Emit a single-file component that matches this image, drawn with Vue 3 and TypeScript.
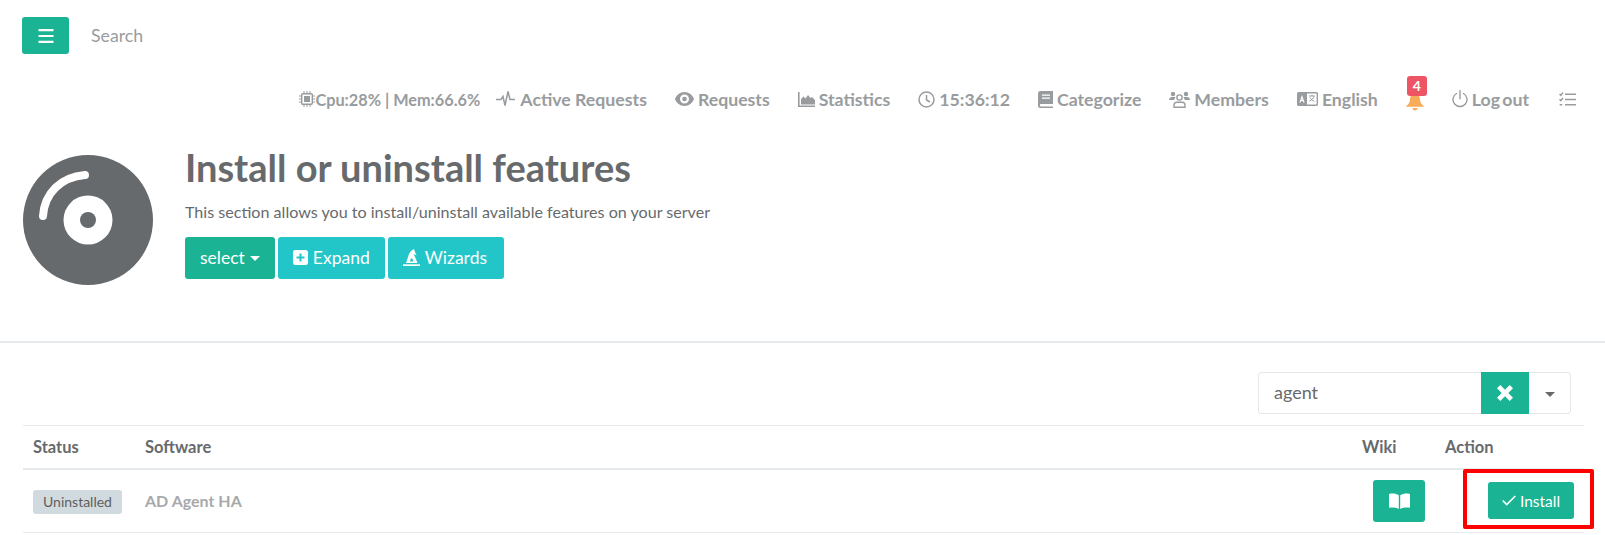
<template>
  <div class="page">
    <div class="topbar">
      <button class="menu-btn">
        <svg width="16" height="14" viewBox="0 0 16 14"><path d="M0.500 0h15v2.200h-15zM0.500 5.900h15v2.200h-15zM0.500 11.800h15v2.200h-15z" fill="#fff" /></svg>
      </button>
      <span class="search-text">Search</span>
    </div>

    <nav class="nav">
      <a class="nav-item cpu">
        <svg width="16" height="16" viewBox="0 0 16 16" fill="#999c9e"><rect x="2.700" y="2.700" width="10.600" height="10.600" rx="1" fill="none" stroke="#999c9e" stroke-width="1.400" /><rect x="5" y="5" width="6" height="6" /><path d="M0 4.500h2v1H0zM0 7.500h2v1H0zM0 10.500h2v1H0zM14 4.500h2v1h-2zM14 7.500h2v1h-2zM14 10.500h2v1h-2zM4.500 0h1v2h-1zM7.500 0h1v2h-1zM10.500 0h1v2h-1zM4.500 14h1v2h-1zM7.500 14h1v2h-1zM10.500 14h1v2h-1z" /></svg>
        <span>Cpu:28% | Mem:66.6%</span>
      </a>
      <a class="nav-item">
        <svg width="20" height="16" viewBox="0 0 20 16" fill="none" stroke="#999c9e" stroke-width="1.500"><path d="M0 8.500h5l2-3 2 9 3-14 2 8h5" /></svg>
        <span>Active Requests</span>
      </a>
      <a class="nav-item">
        <svg width="19" height="14" viewBox="0 0 19 14"><path fill-rule="evenodd" d="M9.500 0C14 0 17.500 3 19 7c-1.500 4-5 7-9.500 7S1.500 11 0 7c1.500-4 5-7 9.500-7zM9.500 2.500a4.500 4.500 0 1 0 0 9 4.500 4.500 0 0 0 0-9z" fill="#999c9e" /><circle cx="9.500" cy="7" r="2.300" fill="#999c9e" /></svg>
        <span>Requests</span>
      </a>
      <a class="nav-item">
        <svg width="17" height="15" viewBox="0 0 17 15" fill="#999c9e"><path d="M0 0h1.600v13.400H17V15H0z" /><path d="M3 12.400V7l2.500-2.500L7.500 6.500 10 3l2.500 3L14 5l3 3v4.400z" /></svg>
        <span>Statistics</span>
      </a>
      <a class="nav-item">
        <svg width="17" height="17" viewBox="0 0 17 17" fill="none" stroke="#999c9e" stroke-width="1.500"><circle cx="8.500" cy="8.500" r="7.500" /><path d="M8.500 4v5l3.500 2" /></svg>
        <span>15:36:12</span>
      </a>
      <a class="nav-item">
        <svg width="15" height="17" viewBox="0 0 15 17"><path d="M2.500 0H15v13H3a1.200 1.200 0 0 0 0 2.400h12V17H2.500A2.500 2.500 0 0 1 0 14.500v-12A2.500 2.500 0 0 1 2.500 0z" fill="#999c9e" /><path d="M4 3.500h8v1.300H4zM4 6.500h8v1.300H4z" fill="#fff" /></svg>
        <span>Categorize</span>
      </a>
      <a class="nav-item">
        <svg width="21" height="17" viewBox="0 0 21 17" fill="#999c9e"><circle cx="4" cy="3" r="2.200" /><circle cx="17" cy="3" r="2.200" /><path d="M0 9c0-2 1.500-3 3-3h2.500c.5 0 .8.200 1 .4C5.800 7 5.300 8 5.300 9z" /><path d="M21 9c0-2-1.500-3-3-3h-2.500c-.5 0-.8.200-1 .4.700.6 1.200 1.600 1.200 2.600z" /><circle cx="10.500" cy="6.500" r="2.600" fill="none" stroke="#999c9e" stroke-width="1.400" /><path d="M5 16.200v-2c0-2 1.500-3 3-3h5c1.500 0 3 1 3 3v2z" fill="none" stroke="#999c9e" stroke-width="1.400" /></svg>
        <span>Members</span>
      </a>
      <a class="nav-item">
        <svg width="21" height="14" viewBox="0 0 21 14"><path d="M1.500 0H10v14H1.500A1.500 1.500 0 0 1 0 12.500v-11A1.500 1.500 0 0 1 1.500 0z" fill="#999c9e" /><path d="M10 .7h9.500a.8.8 0 0 1 .8.8v11a.8.8 0 0 1-.8.8H10" fill="none" stroke="#999c9e" stroke-width="1.400" /><path d="M5 3l2.600 7.500H6.300l-.5-1.500H4.200l-.5 1.500H2.400zM4.500 7.800h1L5 6.200z" fill="#fff" /><path d="M12 4h6M15 2.800V4M13 5.500c.8 2 2.800 3.200 4.500 3.800M17 4.500c-.6 2-2.300 3.400-4.500 4.500" fill="none" stroke="#999c9e" stroke-width="1" /></svg>
        <span>English</span>
      </a>
      <a class="nav-item bell">
        <svg width="18" height="17" viewBox="0 0 18 17" fill="#f8ac59"><path d="M9 0c3.300 0 5 2.400 5 5.500 0 3 1.500 5 3.800 6.500v.8H.2V12C2.500 10.500 4 8.500 4 5.500 4 2.400 5.700 0 9 0z" /><path d="M6.500 14h5c0 1.500-1.100 2.500-2.500 2.500S6.500 15.500 6.500 14z" /></svg>
        <span class="badge">4</span>
      </a>
      <a class="nav-item logout">
        <svg width="16" height="18" viewBox="0 0 16 18" fill="none" stroke="#999c9e" stroke-width="1.400" stroke-linecap="round"><path d="M8 .8v8" /><path d="M4.500 3.500a7 7 0 1 0 7 0" /></svg>
        <span>Log out</span>
      </a>
      <a class="nav-item">
        <svg width="17" height="15" viewBox="0 0 17 15" fill="none" stroke="#999c9e" stroke-width="1.500"><path d="M.5 2l1.300 1.300L4 .6M.5 7.300l1.300 1.300L4 6" /><path d="M6 2.300h11M6 7.500h11M6 12.700h11M.7 12.700h2.600" /></svg>
      </a>
    </nav>

    <header class="head">
      <svg class="disc" width="130" height="130" viewBox="0 0 130 130">
        <circle cx="65" cy="65" r="65" fill="#676a6c" />
        <circle cx="65" cy="65" r="24.500" fill="#fff" />
        <circle cx="65" cy="65" r="8" fill="#676a6c" />
        <path d="M20 61C21.500 38 38 22 62 20" fill="none" stroke="#fff" stroke-width="8" stroke-linecap="round" />
      </svg>
      <div class="head-text">
        <h1>Install or uninstall features</h1>
        <p>This section allows you to install/uninstall available features on your server</p>
        <div class="actions">
          <button class="btn primary">select<i class="caret"></i></button>
          <button class="btn info">
            <svg width="15" height="15" viewBox="0 0 15 15"><path fill-rule="evenodd" d="M2.500 0h10A2.500 2.500 0 0 1 15 2.500v10a2.500 2.500 0 0 1-2.500 2.500h-10A2.500 2.500 0 0 1 0 12.500v-10A2.500 2.500 0 0 1 2.500 0zM6.500 3.500v3h-3v2h3v3h2v-3h3v-2h-3v-3z" fill="#fff" /></svg>
            Expand
          </button>
          <button class="btn info">
            <svg width="17" height="17" viewBox="0 0 17 17"><path fill-rule="evenodd" d="M11 0C7.500 1.500 6 4.500 5 8l-2 6h11.500L12.500 9C12 7.500 11 6.500 10.500 5l3 1.500C12.500 4 11.500 2 11 0zM7.800 9.500L7 12.500h3.500L9.300 9.500z" fill="#fff" /><path d="M0 15.300h17V17H0z" fill="#fff" /></svg>
            Wizards
          </button>
        </div>
      </div>
    </header>

    <div class="search-row">
      <div class="search-group">
        <span class="search-value">agent</span>
        <button class="clear">
          <svg width="16" height="16" viewBox="0 0 16 16"><path d="M3.300 0L8 4.700 12.700 0 16 3.300 11.300 8 16 12.700 12.700 16 8 11.300 3.300 16 0 12.700 4.700 8 0 3.300z" fill="#fff" /></svg>
        </button>
        <span class="drop"><i class="caret dark"></i></span>
      </div>
    </div>

    <table class="table">
      <thead>
        <tr>
          <th class="c-status">Status</th>
          <th>Software</th>
          <th class="c-wiki">Wiki</th>
          <th class="c-action">Action</th>
        </tr>
      </thead>
      <tbody>
        <tr v-for="row in rows" :key="row.name">
          <td class="c-status"><span class="label">{{ row.status }}</span></td>
          <td class="name">{{ row.name }}</td>
          <td class="c-wiki">
            <button class="wiki-btn">
              <svg width="21" height="16" viewBox="0 0 21 16"><path d="M0 1c3.500-.8 7-.6 9.800 1.200V16C7 14.500 3.500 14.200 0 14.800zM21 1c-3.500-.8-7-.6-9.800 1.200V16c2.800-1.500 6.300-1.800 9.800-1.200z" fill="#fff" /></svg>
            </button>
          </td>
          <td class="c-action">
            <div class="install-wrap">
              <button class="install-btn">
                <svg width="14" height="11" viewBox="0 0 14 11" fill="none" stroke="#fff" stroke-width="1.600"><path d="M.7 5.500l4 4L13.300 1" /></svg>
                Install
              </button>
              <span class="mark"></span>
            </div>
          </td>
        </tr>
      </tbody>
    </table>
  </div>
</template>

<script setup lang="ts">
interface Row {
  status: string
  name: string
}

const rows: Row[] = [{ status: 'Uninstalled', name: 'AD Agent HA' }]
</script>

<style>
html,
body {
  margin: 0;
  background: #fff;
  overflow: hidden;
}
</style>

<style scoped>
.page {
  width: 1605px;
  height: 535px;
  font-family: Lato, "Open Sans", sans-serif;
  color: #676a6c;
  box-sizing: border-box;
  overflow: hidden;
}

button {
  font-family: inherit;
  border: 0;
  cursor: pointer;
}

.topbar {
  display: flex;
  align-items: center;
  gap: 22px;
  height: 37px;
  padding: 17px 0 0 22px;
}

.menu-btn {
  width: 47px;
  height: 37px;
  background: #1ab394;
  border-radius: 3px;
  padding: 0;
  display: flex;
  align-items: center;
  justify-content: center;
}

.search-text {
  font-size: 17.700px;
  color: #999c9e;
}

.nav {
  display: flex;
  justify-content: flex-end;
  align-items: center;
  gap: 28px;
  height: 40px;
  margin-top: 25px;
  padding-right: 29px;
}

.nav-item {
  display: flex;
  align-items: center;
  gap: 4px;
  font-size: 17.700px;
  font-weight: 700;
  color: #999c9e;
  position: relative;
}

.cpu {
  gap: 0;
  font-size: 16.300px;
  margin-right: -12px;
}

.logout {
  word-spacing: -2px;
  margin-right: 2px;
}

.bell {
  width: 18px;
  height: 20px;
  padding-top: 6px;
  box-sizing: border-box;
}

.badge {
  position: absolute;
  left: 1px;
  top: -13px;
  width: 20px;
  height: 20px;
  background: #ed5565;
  color: #fff;
  border-radius: 3px;
  font-size: 14px;
  font-weight: 700;
  line-height: 20px;
  text-align: center;
}

.head {
  display: flex;
  gap: 32px;
  padding: 36px 0 0 23px;
  height: 224px;
  border-bottom: 2px solid #e7eaec;
  box-sizing: border-box;
}

.disc {
  flex: none;
}

.head-text {
  margin-top: -10px;
}

h1 {
  margin: 0;
  font-size: 38px;
  font-weight: 700;
  line-height: 44px;
  color: #676a6c;
}

.head-text p {
  margin: 12px 0 0;
  font-size: 16.100px;
  line-height: 22px;
}

.actions {
  display: flex;
  gap: 3px;
  margin-top: 14px;
}

.btn {
  height: 42px;
  display: flex;
  align-items: center;
  gap: 5px;
  padding: 0 15px 2px;
  border-radius: 3px;
  font-size: 17.500px;
  color: #fff;
}

.btn.info:last-child {
  padding-right: 17px;
}

.primary {
  background: #1ab394;
}

.info {
  background: #23c6c8;
}

.caret {
  display: inline-block;
  width: 0;
  height: 0;
  border-left: 5px solid transparent;
  border-right: 5px solid transparent;
  border-top: 5px solid #fff;
  margin-top: 3px;
}

.caret.dark {
  border-top-color: #676a6c;
}

.search-row {
  display: flex;
  justify-content: flex-end;
  padding: 29px 34px 0 0;
}

.search-group {
  display: flex;
  height: 42px;
  width: 313px;
  box-sizing: border-box;
  border: 1px solid #e5e6e7;
  border-radius: 3px;
}

.search-value {
  flex: 1;
  font-size: 18px;
  line-height: 38px;
  padding-left: 15px;
}

.clear {
  width: 48px;
  height: 42px;
  margin-top: -1px;
  background: #1ab394;
  padding: 0;
  display: flex;
  align-items: center;
  justify-content: center;
}

.drop {
  width: 41px;
  display: flex;
  align-items: center;
  justify-content: center;
}

.table {
  width: 1561px;
  margin: 11px 0 0 23px;
  border-collapse: collapse;
  table-layout: fixed;
}

th {
  height: 43px;
  padding: 0 0 0 10px;
  text-align: left;
  font-size: 16.500px;
  font-weight: 700;
  border-top: 1px solid #e7eaec;
  border-bottom: 2px solid #e7eaec;
  box-sizing: border-box;
}

td {
  height: 64px;
  padding: 0 0 0 10px;
  border-bottom: 1px solid #e7eaec;
  box-sizing: border-box;
}

.c-status {
  width: 112px;
}

.c-wiki {
  width: 83px;
}

.c-action {
  width: 149px;
}

td.c-wiki {
  padding-left: 21px;
}

.label {
  display: inline-block;
  background: #d1dade;
  border-radius: 3px;
  font-size: 14px;
  line-height: 24px;
  margin-top: 3px;
  padding: 0 10px;
  color: #5e5e5e;
  vertical-align: middle;
}

.name {
  font-size: 16px;
  font-weight: 700;
  color: #a7a9ab;
}

.wiki-btn {
  width: 52px;
  height: 42px;
  background: #1ab394;
  border-radius: 3px;
  padding: 0;
  display: flex;
  align-items: center;
  justify-content: center;
}

.install-wrap {
  position: relative;
  padding-left: 43px;
}

.install-btn {
  width: 86px;
  height: 37px;
  background: #1ab394;
  border-radius: 3px;
  color: #fff;
  font-size: 15.500px;
  padding: 0;
  display: flex;
  align-items: center;
  justify-content: center;
  gap: 4px;
}

.mark {
  position: absolute;
  left: 18px;
  top: -13px;
  width: 131px;
  height: 60px;
  box-sizing: border-box;
  border: 4px solid #ff0000;
  border-radius: 2px;
}
</style>
